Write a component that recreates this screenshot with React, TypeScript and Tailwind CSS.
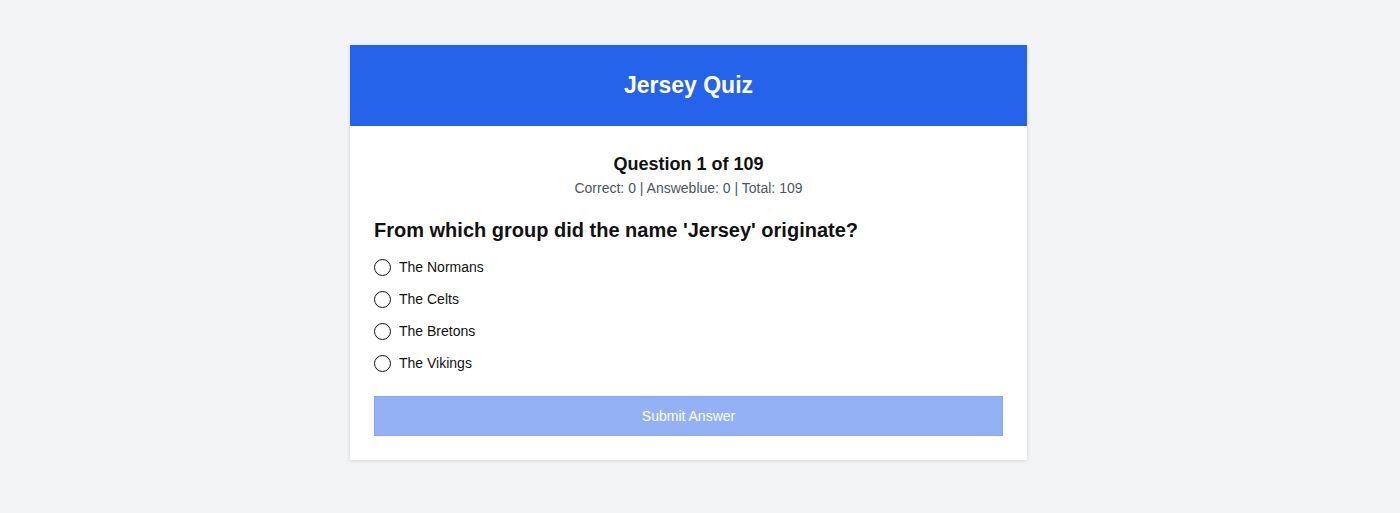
const options = ["The Normans", "The Celts", "The Bretons", "The Vikings"];

export default function App() {
  return (
    <div className="min-h-[513px] bg-[#f3f4f6] pt-[45px] font-['Liberation_Sans',Arial,sans-serif]">
      <div className="flex justify-center pr-[23px]">
        <div className="w-[677px] bg-white shadow-[0_1px_4px_rgba(0,0,0,0.12)]">
          <div className="bg-[#2563eb] pt-6 pb-[25px] text-center">
            <h1 className="text-[23px] font-bold leading-8 text-white">Jersey Quiz</h1>
          </div>
          <div className="px-6 pt-6 pb-6">
            <div className="text-center">
              <h2 className="text-lg font-bold leading-7 text-[#111]">Question 1 of 109</h2>
              <p className="text-sm leading-5 text-[#4b5563]">
                Correct: 0 | Answeblue: 0 | Total: 109
              </p>
            </div>
            <h3 className="mt-[18px] text-xl font-bold leading-7 text-[#111]">
              From which group did the name 'Jersey' originate?
            </h3>
            <div className="mt-[13px] flex flex-col gap-3">
              {options.map((opt) => (
                <label key={opt} className="flex h-5 items-center gap-2 text-sm text-[#111]">
                  <span className="h-[17px] w-[17px] rounded-full border-[1.5px] border-[#111]" />
                  {opt}
                </label>
              ))}
            </div>
            <button
              type="button"
              disabled
              className="mt-[23px] h-10 w-full border border-[#86a7f3] bg-[#94b1f5] text-sm text-white"
            >
              Submit Answer
            </button>
          </div>
        </div>
      </div>
    </div>
  );
}
